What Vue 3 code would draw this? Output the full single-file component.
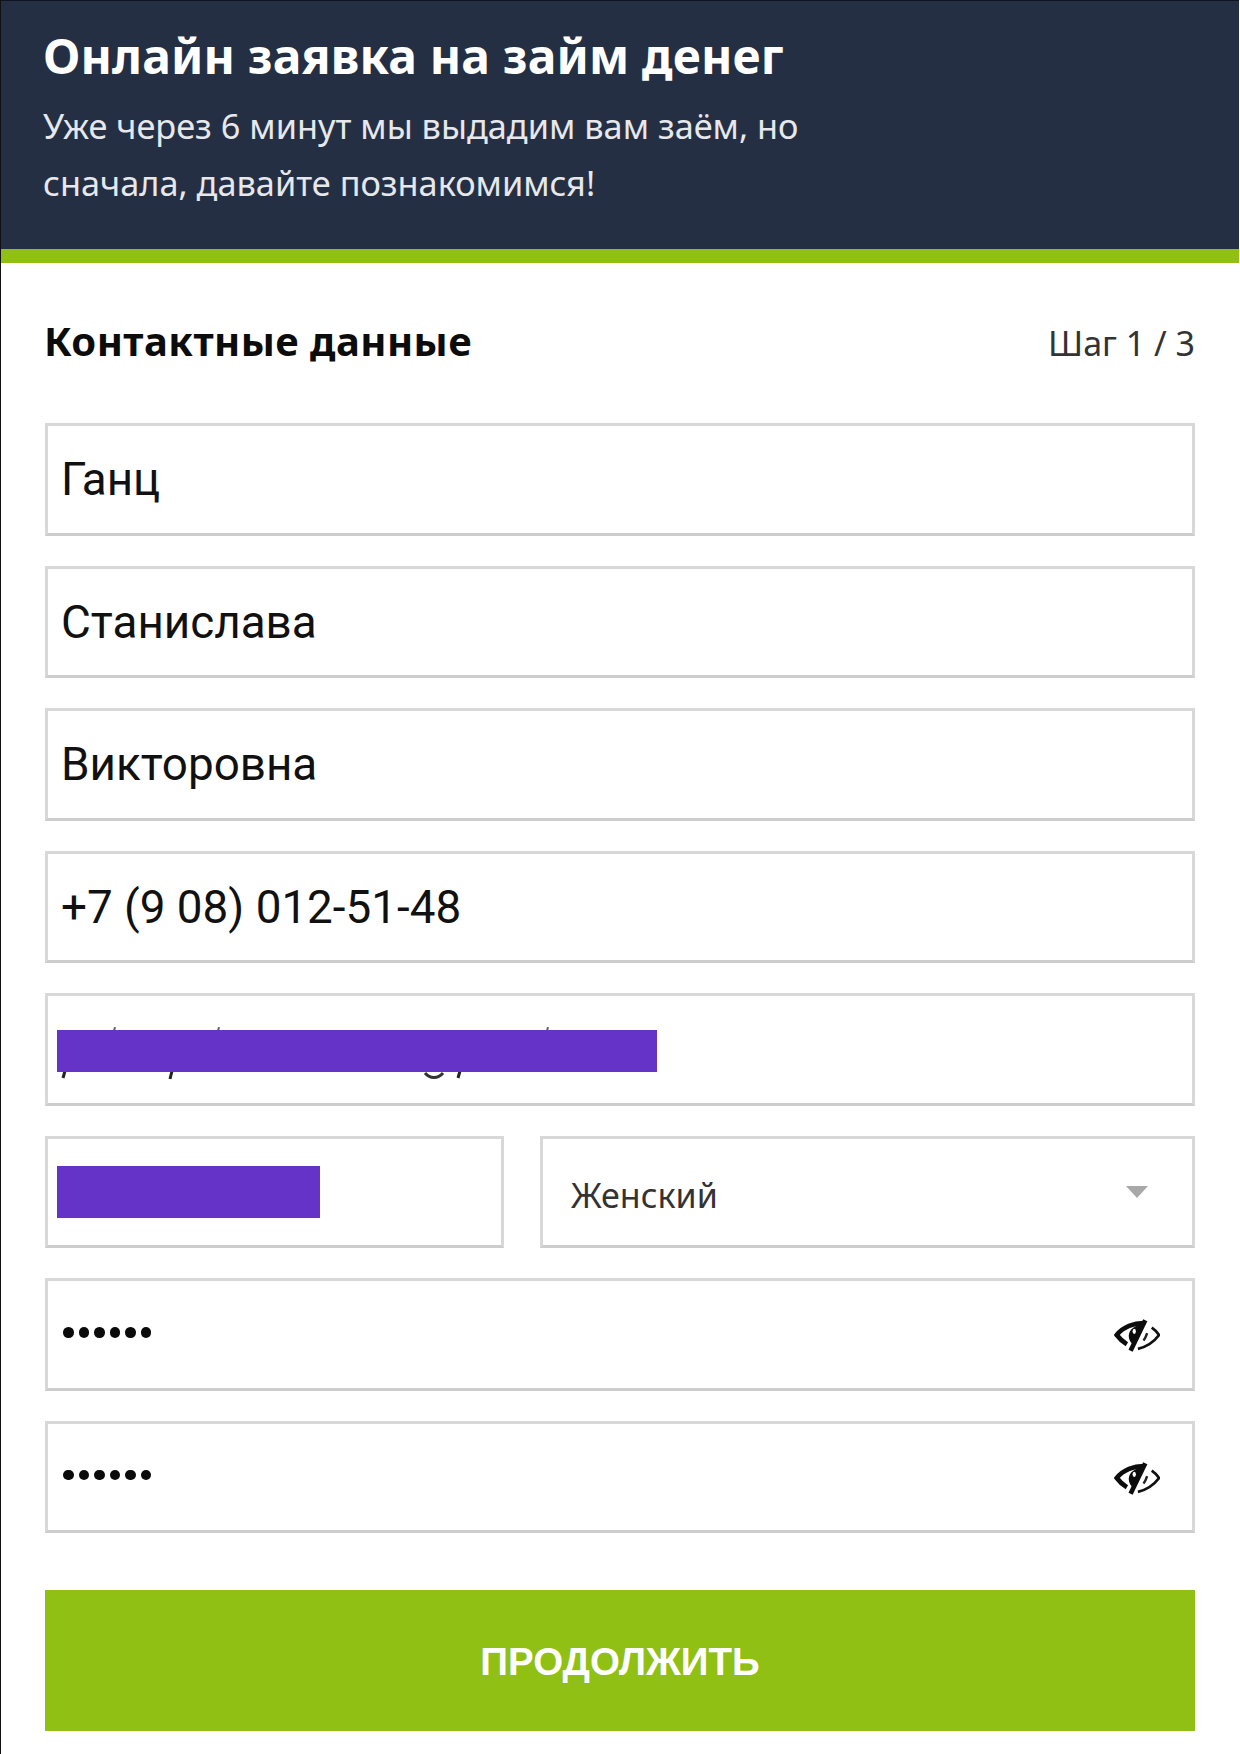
<script setup>
const fields = [
  { id: 'last', value: 'Ганц' },
  { id: 'first', value: 'Станислава' },
  { id: 'middle', value: 'Викторовна' },
  { id: 'phone', value: '+7 (9 08) 012-51-48' }
]
const passwords = ['password', 'confirm']
</script>

<template>
  <div class="page">
    <header class="hero">
      <h1 class="hero-title">Онлайн заявка на займ денег</h1>
      <p class="hero-sub">Уже через 6 минут мы выдадим вам заём, но<br />сначала, давайте познакомимся!</p>
    </header>
    <main class="form">
      <div class="form-head">
        <h2 class="form-title">Контактные данные</h2>
        <span class="step">Шаг 1 / 3</span>
      </div>
      <div class="fields">
        <div v-for="f in fields" :key="f.id" class="field"><span class="value">{{ f.value }}</span></div>
        <div class="field masked">
          <svg class="ticks" viewBox="0 0 620 60" width="620" height="60" aria-hidden="true">
            <path d="M58 0l-1 4M162 0l-1 4M491 0l-1 4" stroke="#666" stroke-width="2" fill="none" />
            <path d="M8 44l-2 7M115 44l-2 8M403 44l-2 7" stroke="#222" stroke-width="3" fill="none" />
            <path d="M368 46c5 6 13 6 18 0" stroke="#333" stroke-width="3" fill="none" />
          </svg>
          <span class="mask mask-email"></span>
        </div>
        <div class="row">
          <div class="field masked birth"><span class="mask mask-birth"></span></div>
          <div class="field select">
            <span class="select-value">Женский</span>
            <span class="caret"></span>
          </div>
        </div>
        <div v-for="p in passwords" :key="p" class="field secret">
          <span class="dots"><i v-for="n in 6" :key="n"></i></span>
          <svg class="eye" viewBox="0 0 50 36" width="46" height="34" aria-hidden="true">
            <path d="M32 5C22 5 10 9 3 18c3 4 6 7 11 10" fill="none" stroke="#0c0c0c" stroke-width="5" />
            <path d="M32 6c-9 1-16 6-16 13 0 4 2 7 5 10z" fill="#0c0c0c" />
            <ellipse cx="22" cy="14" rx="1.8" ry="2.8" fill="#fff" />
            <path d="M34 2 18 35" stroke="#0c0c0c" stroke-width="5" fill="none" />
            <path d="M41 10c3 2 6 5 8 8-6 8-14 13-23 15" fill="none" stroke="#111" stroke-width="3" />
            <path d="M36 16c-1 3-2 6-4 8" fill="none" stroke="#222" stroke-width="2.6" />
          </svg>
        </div>
      </div>
      <button class="submit" type="button">ПРОДОЛЖИТЬ</button>
    </main>
  </div>
</template>

<style scoped>
.page {
  width: 1240px;
  height: 1754px;
  background: #fff;
  border-left: 1px solid #111;
  box-sizing: border-box;
  font-family: "Noto Sans", "Open Sans", sans-serif;
  color: #222;
  overflow: hidden;
}
.hero {
  width: 1238px;
  height: 263px;
  box-sizing: border-box;
  background: #252f44;
  border-top: 1px solid #0e1420;
  border-bottom: 14px solid #8fc013;
  padding: 25px 0 0 42px;
  color: #fff;
}
.hero-title {
  margin: 0;
  font-size: 48px;
  line-height: 60px;
  font-weight: 700;
  letter-spacing: 0.17px;
}
.hero-sub {
  margin: 11px 0 0;
  font-size: 34.3px;
  line-height: 57px;
  font-weight: 400;
  color: #e6e8ec;
}
.form {
  padding: 0 45px 0 44px;
}
.form-head {
  display: flex;
  justify-content: space-between;
  align-items: center;
  height: 160px;
}
.form-title {
  margin: 0 0 6px -1px;
  font-size: 40px;
  letter-spacing: 0.45px;
  font-weight: 700;
  color: #0c0c0c;
}
.step {
  font-size: 34px;
  color: #333;
}
.fields {
  display: flex;
  flex-direction: column;
  gap: 30px;
}
.row {
  display: flex;
  gap: 36px;
}
.field {
  position: relative;
  height: 112.5px;
  box-sizing: border-box;
  border: 3px solid #d8d8d8;
  border-bottom-color: #cdcdcd;
  background: #fff;
  display: flex;
  align-items: center;
  padding-left: 13px;
}
.value {
  font-family: Roboto, "Noto Sans", sans-serif;
  font-size: 45.8px;
  color: #111;
  margin-top: 1px;
}
.birth {
  width: 459px;
  flex: none;
}
.select {
  flex: 1;
  justify-content: space-between;
  padding: 0 44px 0 28px;
}
.select-value {
  font-size: 34px;
  color: #333;
  padding-top: 6px;
}
.caret {
  width: 0;
  height: 0;
  border-left: 11px solid transparent;
  border-right: 11px solid transparent;
  border-top: 12px solid #a8a8a8;
}
.mask {
  position: absolute;
  left: 9px;
  background: #6633c9;
}
.ticks {
  position: absolute;
  left: 9px;
  top: 31px;
}
.mask-email {
  top: 34px;
  width: 600px;
  height: 42px;
}
.mask-birth {
  top: 27px;
  width: 263px;
  height: 52px;
}
.secret {
  justify-content: space-between;
  padding: 0 32px 0 15px;
}
.dots {
  display: flex;
  gap: 5px;
  margin-top: -4px;
}
.dots i {
  width: 10.5px;
  height: 10.5px;
  border-radius: 50%;
  background: #0a0a0a;
}
.eye {
  margin-top: 2px;
}
.submit {
  display: block;
  width: 100%;
  height: 141px;
  margin-top: 57px;
  border: 0;
  background: #8fc013;
  color: #fff;
  font-family: "Liberation Sans", sans-serif;
  font-size: 38.5px;
  font-weight: 700;
  padding-top: 3px;
}
</style>
